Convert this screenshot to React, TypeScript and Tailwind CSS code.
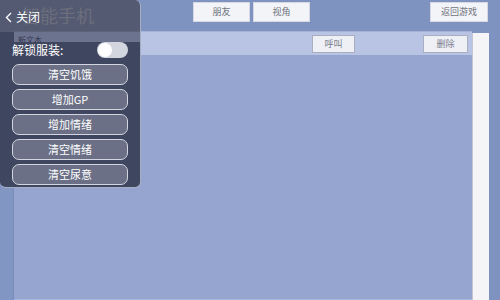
const cjk = '"Noto Sans CJK SC", "Noto Sans", sans-serif';

const TopButton = ({label, className = ''}: {label: string; className?: string}) => (
    <button
        type="button"
        className={`h-[20px] mt-[2px] bg-[#f3f4f7] border border-[#d6d9e3] text-[9px] text-[#6f7380] flex items-center justify-center ${className}`}>
        {label}
    </button>
);

const RowButton = ({label, className = ''}: {label: string; className?: string}) => (
    <button
        type="button"
        className={`h-[18px] bg-[#eef0f6] border-[1.5px] border-[#a9aec0] text-[9px] text-[#7a7e8c] flex items-center justify-center ${className}`}>
        {label}
    </button>
);

const menuItems = ['清空饥饿', '增加GP', '增加情绪', '清空情绪', '清空尿意'];

export default function App() {
    return (
        <div
            className="relative w-[500px] h-[300px] overflow-hidden bg-[#7f93c0] flex flex-col"
            style={{fontFamily: cjk}}>
            {/* top bar */}
            <div className="h-[31px] flex items-start shrink-0">
                <div className="w-[193px] pl-[22px] pt-[2px] text-[18px] leading-[26px] text-[#d4d8e4]">智能手机</div>
                <TopButton label="朋友" className="w-[57px]" />
                <TopButton label="视角" className="w-[57px] ml-[3px]" />
                <TopButton label="返回游戏" className="w-[58px] ml-auto mr-[12px]" />
            </div>

            {/* main area */}
            <div className="flex-1 flex">
                <div className="w-[14px] bg-[#8296c3] border-r border-[#7a8dba]" />
                <div className="flex-1 flex flex-col border-b border-[#a9b6dc]">
                    <div className="h-[24px] bg-[#b9c3e3] border-t border-[#a7b2d6] flex items-start">
                        <span className="w-[298px] pl-[4px] pt-[3px] text-[8px] leading-[10px] text-[#3d4252]">新文本</span>
                        <RowButton label="呼叫" className="w-[43px] mt-[3px]" />
                        <RowButton label="删除" className="w-[45px] mt-[3px] ml-[68px]" />
                    </div>
                    <div className="flex-1 bg-[#95a5d0]" />
                </div>
                <div className="w-[17px] mt-[2px] bg-[#f5f5f8] border-l border-[#c2c6d2]" />
                <div className="w-[11px]" />
            </div>

            {/* phone menu overlay */}
            <div className="absolute left-0 top-0 w-[141px] h-[188px] flex flex-col overflow-hidden rounded-tr-[6px] rounded-b-[6px] border-r border-b border-[#a8aec2]">
                <div className="h-[32px] bg-[rgba(64,66,80,0.7)] flex items-center pl-[5px] pt-[2px] gap-[4px] text-white">
                    <svg width="7" height="11" viewBox="0 0 7 11" fill="none">
                        <path d="M6 1 1.5 5.5 6 10" stroke="white" strokeWidth="1.4" />
                    </svg>
                    <span className="text-[12px] leading-none">关闭</span>
                </div>
                <div className="h-[10px] flex">
                    <div className="w-[14px] bg-[#3f4660]" />
                    <div className="flex-1 bg-[rgba(45,50,75,0.55)]" />
                </div>
                <div className="flex-1 bg-[#3f4660] flex flex-col px-[12px]">
                    <div className="h-[16px] flex items-center justify-between">
                        <span className="text-[12px] leading-none text-white">解锁服装:</span>
                        <div className="w-[31px] h-[16px] rounded-full bg-[#d3d6df] flex items-center pl-[1px]">
                            <div className="w-[14px] h-[14px] rounded-full bg-white" />
                        </div>
                    </div>
                    <div className="flex flex-col gap-[4px] mt-[6px]">
                        {menuItems.map(item => (
                            <button
                                key={item}
                                type="button"
                                className="h-[21px] w-[116px] rounded-[7px] bg-[#6b7086] border-[1.5px] border-[#d3d6e0] text-[11px] text-white flex items-center justify-center">
                                {item}
                            </button>
                        ))}
                    </div>
                </div>
            </div>
        </div>
    );
}
